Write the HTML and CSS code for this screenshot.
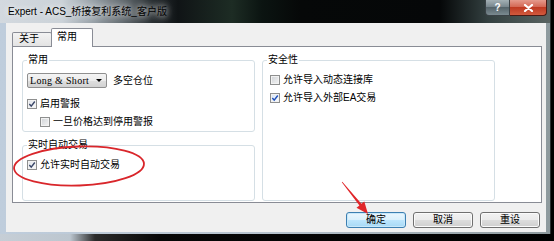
FILE: index.html
```html
<!DOCTYPE html>
<html lang="zh-CN">
<head>
    <meta charset="UTF-8">
    <title>Expert - ACS_桥接复利系统_客户版</title>
    <link rel="stylesheet" href="styles.css">
</head>
<body>
    <div class="window">
        <div class="titlebar">
            <span class="title">Expert - ACS_桥接复利系统_客户版</span>
            <div class="caption-buttons">
                <span class="cap-help">?</span>
                <span class="cap-close">
                    <svg width="11" height="8" viewBox="0 0 11 8">
                        <path d="M2 1 L9 7 M9 1 L2 7" stroke="#fff" stroke-width="2.2" stroke-linecap="round"/>
                    </svg>
                </span>
            </div>
        </div>

        <div class="client">
            <div class="tabs">
                <div class="tab">关于</div>
                <div class="tab active">常用</div>
            </div>

            <div class="panel">
                <div class="column">
                    <fieldset class="group">
                        <legend>常用</legend>
                        <div class="combo-row">
                            <div class="combo">
                                <span>Long &amp; Short</span>
                                <span class="combo-arrow"></span>
                            </div>
                            <span>多空仓位</span>
                        </div>
                        <div class="check">
                            <span class="box checked">
                                <svg viewBox="0 0 8 8"><path d="M1.3 4.1 L3.2 6.1 L6.8 1.5"/></svg>
                            </span>
                            <span>启用警报</span>
                        </div>
                        <div class="check indent">
                            <span class="box"></span>
                            <span>一旦价格达到停用警报</span>
                        </div>
                    </fieldset>

                    <fieldset class="group grow">
                        <legend>实时自动交易</legend>
                        <div class="check">
                            <span class="box checked">
                                <svg viewBox="0 0 8 8"><path d="M1.3 4.1 L3.2 6.1 L6.8 1.5"/></svg>
                            </span>
                            <span>允许实时自动交易</span>
                        </div>
                    </fieldset>
                </div>

                <fieldset class="group security">
                    <legend>安全性</legend>
                    <div class="check">
                        <span class="box"></span>
                        <span>允许导入动态连接库</span>
                    </div>
                    <div class="check">
                        <span class="box checked blue">
                            <svg viewBox="0 0 8 8"><path d="M1.3 4.1 L3.2 6.1 L6.8 1.5"/></svg>
                        </span>
                        <span>允许导入外部EA交易</span>
                    </div>
                </fieldset>
            </div>

            <div class="actions">
                <button class="btn default">确定</button>
                <button class="btn">取消</button>
                <button class="btn">重设</button>
            </div>
        </div>
    </div>

    <!-- hand-drawn annotations on top of the screenshot -->
    <svg class="markup" width="554" height="241" viewBox="0 0 554 241">
        <ellipse cx="79" cy="166" rx="65" ry="19.5" fill="none" stroke="#d9262b" stroke-width="1.8" transform="rotate(-2 79 166)"/>
        <path d="M341.8 182.2 L359.4 205.4 L356.5 207.8 L368 214 L364.3 201.4 L361.4 203.8 L342.3 181.8 Z" fill="#e0262a"/>
    </svg>
</body>
</html>
```

FILE: styles.css
```css
body {
    margin: 0;
    width: 554px;
    height: 241px;
    position: relative;
    overflow: hidden;
    font-family: "Liberation Sans", "Noto Sans CJK SC", sans-serif;
    font-size: 10px;
    color: #000;
    background: linear-gradient(to right, #c6ced6 0, #bcc6cf 70px, #2a2a2a 95px, #070707 160px, #000 100%);
}

.window {
    width: 551px;
    height: 234px;
    box-sizing: border-box;
    display: flex;
    flex-direction: column;
    border-right: 1px solid #2a2f31;
    background: linear-gradient(to right, #bfcddc, #b6c2cd 50%, #8e9a9e);
}

.titlebar {
    height: 23px;
    flex-shrink: 0;
    display: flex;
    justify-content: space-between;
    align-items: flex-start;
    padding: 0 3px 0 8px;
    background: linear-gradient(to right, #d3d9df 0, #cbd2d8 62px, #9aa3aa 92px, #646c71 122px, #2a3033 152px, #101416 178px, #1d2c24 232px, #0b1411 262px, #060808 300px, #050708 440px, #334040 488px, #5a6462 551px);
}

.title {
    line-height: 23px;
    font-size: 10px;
    color: #000;
    text-shadow: 0 0 6px rgba(255, 255, 255, 0.9), 0 0 10px rgba(255, 255, 255, 0.6);
}

.caption-buttons {
    display: flex;
}

.cap-help,
.cap-close {
    height: 16px;
    box-sizing: border-box;
    display: flex;
    align-items: center;
    justify-content: center;
    color: #fff;
    font-weight: bold;
    font-size: 10px;
}

.cap-help {
    width: 25px;
    border: 1px solid #3a4246;
    border-top: 0;
    border-radius: 0 0 0 4px;
    background: linear-gradient(#a3b0b4, #74838a 50%, #56656b 50%, #7a8a90);
}

.cap-close {
    width: 37px;
    border: 1px solid #4b1a14;
    border-top: 0;
    border-left: 0;
    border-radius: 0 0 4px 0;
    background: linear-gradient(#e59a8c, #d2634f 50%, #bf3a22 50%, #d25a3e);
}

.client {
    flex: 1;
    margin: 0 4px 2px 6px;
    padding: 5px 4px 0 6px;
    background: #f0f0f0;
    display: flex;
    flex-direction: column;
}

.tabs {
    display: flex;
    align-items: flex-end;
    height: 18px;
}

.tab {
    box-sizing: border-box;
    width: 40px;
    height: 14px;
    padding-left: 6px;
    border: 1px solid #898c95;
    border-bottom: 0;
    border-radius: 2px 2px 0 0;
    background: linear-gradient(#f3f3f3, #e3e3e3);
    line-height: 12px;
}

.tab.active {
    width: 42px;
    height: 19px;
    margin-left: -1px;
    margin-bottom: -1px;
    padding: 2px 0 0 5px;
    background: #fff;
    position: relative;
    z-index: 1;
}

.panel {
    height: 157px;
    box-sizing: border-box;
    border: 1px solid #898c95;
    background: #fff;
    padding: 7px 0 1px 9px;
    display: grid;
    grid-template-columns: 233px 233px;
    grid-template-rows: 147px;
    column-gap: 7px;
}

.column {
    display: flex;
    flex-direction: column;
    gap: 7px;
}

.group {
    margin: 0;
    padding: 0 4px 3px;
    min-width: 0;
    border: 1px solid #d5dfe5;
    border-radius: 3px;
}

.group.grow {
    flex: 1;
}

.group legend {
    padding: 0 1px;
    line-height: 12px;
}

.security .check {
    margin-left: 3px;
}

.combo-row {
    display: flex;
    align-items: center;
    gap: 6px;
    height: 15px;
    margin-top: 7px;
    line-height: 12px;
}

.combo {
    box-sizing: border-box;
    width: 80px;
    height: 15px;
    padding: 0 4px 0 2px;
    display: flex;
    align-items: center;
    justify-content: space-between;
    border: 1px solid #8f8f8f;
    border-radius: 2px;
    background: linear-gradient(#f4f4f4 0, #ececec 50%, #dfdfdf 50%, #d2d2d2 100%);
    font-family: "Liberation Serif", serif;
    font-size: 10px;
    letter-spacing: 0.3px;
}

.combo-arrow {
    width: 0;
    height: 0;
    border-left: 3px solid transparent;
    border-right: 3px solid transparent;
    border-top: 3px solid #000;
}

.check {
    display: flex;
    align-items: center;
    gap: 3px;
    height: 12px;
    line-height: 12px;
    margin-top: 6px;
}

.combo-row + .check {
    margin-top: 10px;
}

legend + .check {
    margin-top: 8px;
}

.check.indent {
    margin-left: 13px;
}

.box {
    width: 10px;
    height: 10px;
    box-sizing: border-box;
    border: 1px solid #8e8f8f;
    background: linear-gradient(135deg, #cfd2d6, #f4f4f4);
    box-shadow: inset 0 0 0 1px #f2f2f2;
    display: flex;
}

.box.checked {
    background: linear-gradient(135deg, #dfe3ea, #fbfbfb);
}

.box svg {
    width: 8px;
    height: 8px;
}

.box svg path {
    fill: none;
    stroke: #3a4768;
    stroke-width: 1.4;
}

.box.blue {
    background: linear-gradient(135deg, #d6e4f5, #fafcff);
}

.box.blue svg path {
    stroke: #1f4fb8;
}

.actions {
    display: flex;
    justify-content: flex-end;
    gap: 7px;
    margin-top: 9px;
    padding-right: 2px;
}

.btn {
    width: 60px;
    height: 16px;
    box-sizing: border-box;
    padding: 0;
    border: 1px solid #707070;
    border-radius: 3px;
    background: linear-gradient(#f2f2f2 0, #ebebeb 50%, #dddddd 50%, #cfcfcf 100%);
    box-shadow: inset 0 0 0 1px #fbfbfb;
    font-family: "Liberation Sans", "Noto Sans CJK SC", sans-serif;
    font-size: 10px;
    line-height: 14px;
    color: #000;
    text-align: center;
}

.btn.default {
    border-color: #3c7fb1;
    background: linear-gradient(#eaf6fd 0, #d9f0fc 50%, #bee6fd 50%, #a7d9f5 100%);
    box-shadow: inset 0 0 0 1px #c8e8fa;
}

.markup {
    position: absolute;
    top: 0;
    left: 0;
    pointer-events: none;
}
```
